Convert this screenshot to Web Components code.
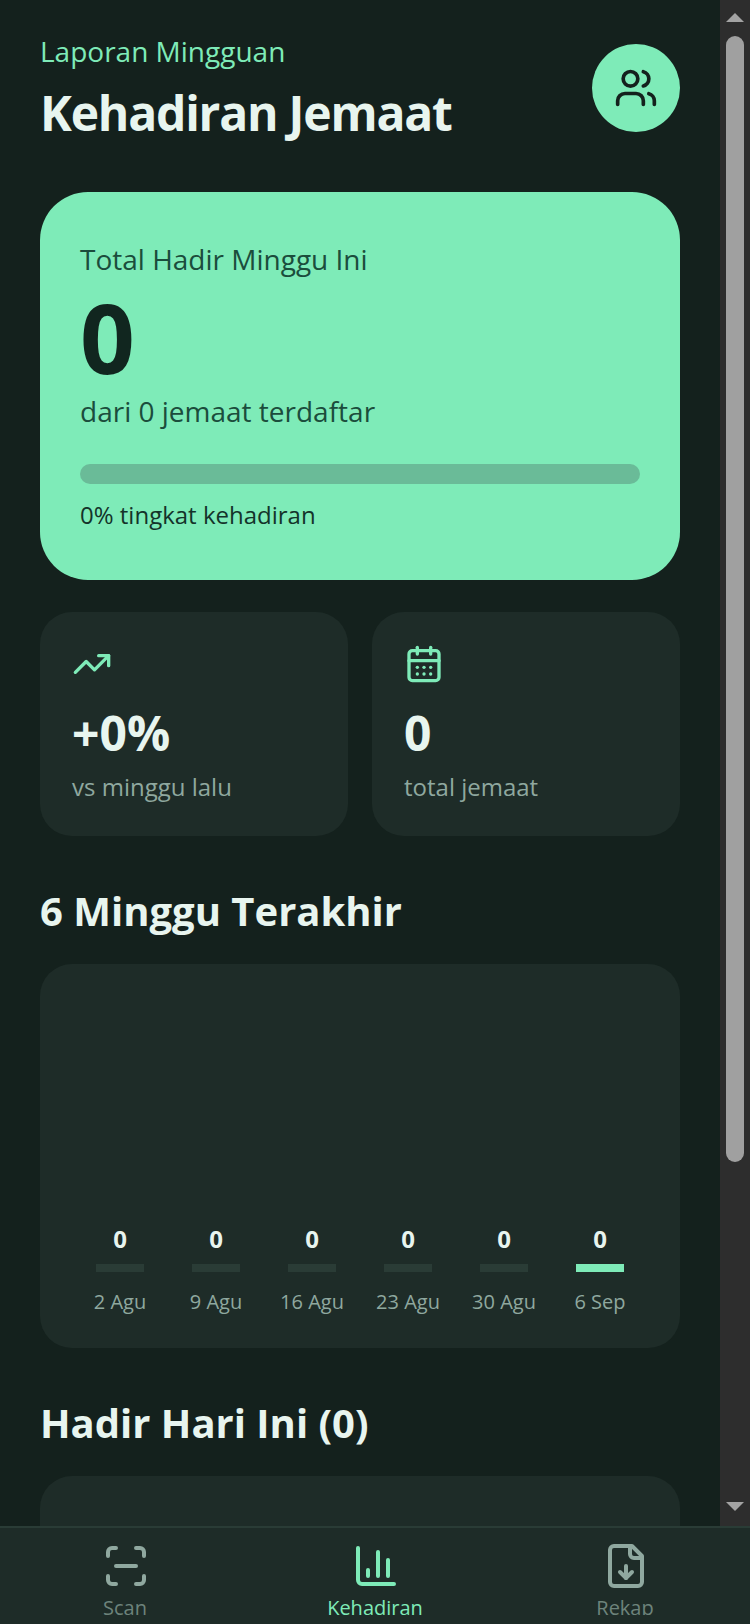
<!DOCTYPE html>
<html lang="id">
<head>
<meta charset="utf-8">
<title>Kehadiran Jemaat</title>
<style>
html,body{margin:0;padding:0;background:#14211d;height:100%;overflow:hidden}
body{font-family:"Open Sans",sans-serif;color:#e8f5ef}
</style>
</head>
<body>
<app-shell>
  <report-header kicker="Laporan Mingguan" heading="Kehadiran Jemaat"></report-header>
  <total-card label="Total Hadir Minggu Ini" value="0" sub="dari 0 jemaat terdaftar" rate="0% tingkat kehadiran"></total-card>
  <stat-grid>
    <stat-card icon="trend" value="+0%" label="vs minggu lalu"></stat-card>
    <stat-card icon="calendar" value="0" label="total jemaat"></stat-card>
  </stat-grid>
  <section-title>6 Minggu Terakhir</section-title>
  <week-chart>
    <week-bar value="0" label="2 Agu"></week-bar>
    <week-bar value="0" label="9 Agu"></week-bar>
    <week-bar value="0" label="16 Agu"></week-bar>
    <week-bar value="0" label="23 Agu"></week-bar>
    <week-bar value="0" label="30 Agu"></week-bar>
    <week-bar value="0" label="6 Sep" current></week-bar>
  </week-chart>
  <section-title>Hadir Hari Ini (0)</section-title>
  <empty-card></empty-card>
  <bottom-nav slot="nav">
    <nav-item icon="scan" label="Scan"></nav-item>
    <nav-item icon="chart" label="Kehadiran" active></nav-item>
    <nav-item icon="file" label="Rekap"></nav-item>
  </bottom-nav>
</app-shell>
<script>
const ICONS = {
  users: '<path d="M16 21v-2a4 4 0 0 0-4-4H6a4 4 0 0 0-4 4v2"/><circle cx="9" cy="7" r="4"/><path d="M22 21v-2a4 4 0 0 0-3-3.87"/><path d="M16 3.13a4 4 0 0 1 0 7.75"/>',
  trend: '<polyline points="22 7 13.5 15.5 8.5 10.5 2 17"/><polyline points="16 7 22 7 22 13"/>',
  calendar: '<path d="M8 2v4"/><path d="M16 2v4"/><rect width="18" height="18" x="3" y="4" rx="2"/><path d="M3 10h18"/><path d="M8 14h.01"/><path d="M12 14h.01"/><path d="M16 14h.01"/><path d="M8 18h.01"/><path d="M12 18h.01"/><path d="M16 18h.01"/>',
  scan: '<path d="M3 7V5a2 2 0 0 1 2-2h2"/><path d="M17 3h2a2 2 0 0 1 2 2v2"/><path d="M21 17v2a2 2 0 0 1-2 2h-2"/><path d="M7 21H5a2 2 0 0 1-2-2v-2"/><path d="M7 12h10"/>',
  chart: '<path d="M3 3v16a2 2 0 0 0 2 2h16"/><path d="M18 17V9"/><path d="M13 17V5"/><path d="M8 17v-3"/>',
  file: '<path d="M15 2H6a2 2 0 0 0-2 2v16a2 2 0 0 0 2 2h12a2 2 0 0 0 2-2V7Z"/><path d="M14 2v4a2 2 0 0 0 2 2h4"/><path d="M12 18v-6"/><path d="m9 15 3 3 3-3"/>'
};
const svg = (n, s) => `<svg part="icon" width="${s}" height="${s}" viewBox="0 0 24 24" fill="none" stroke="currentColor" stroke-width="2" stroke-linecap="round" stroke-linejoin="round" style="display:block">${ICONS[n]}</svg>`;

class Base extends HTMLElement {
  connectedCallback() {
    if (!this.shadowRoot) { this.attachShadow({mode:'open'}).innerHTML = this.render(); }
  }
  a(n) { return this.getAttribute(n) || ''; }
}

customElements.define('app-shell', class extends Base {
  render() { return `<style>
    :host{display:flex;flex-direction:column;width:750px;height:1624px;overflow:hidden;background:#14211d}
    .top{flex:1;min-height:0;display:flex}
    .main{flex:1;min-width:0;overflow:hidden;padding:32px 40px 0;box-sizing:border-box}
    .bar{flex:none;width:30px;background:#2d2d2d;display:flex;flex-direction:column;align-items:center}
    .up,.down{width:0;height:0;border-left:9px solid transparent;border-right:9px solid transparent;flex:none}
    .up{border-bottom:9px solid #a3a3a3;margin-top:13px}
    .thumb{width:18px;height:1126px;margin-top:14px;border-radius:9px;background:#a0a0a0;flex:none}
    .down{border-top:9px solid #a3a3a3;margin-top:auto;margin-bottom:15px}
  </style>
  <div class="top">
    <div class="main"><slot></slot></div>
    <div class="bar" aria-hidden="true"><div class="up"></div><div class="thumb"></div><div class="down"></div></div>
  </div>
  <slot name="nav"></slot>`; }
});

customElements.define('report-header', class extends Base {
  render() { return `<style>
    :host{display:flex;justify-content:space-between;align-items:flex-start;margin-bottom:51px}
    .k{font-size:28px;line-height:38px;color:#7eebb8}
    h1{margin:15px 0 0;font-size:48px;line-height:56px;font-weight:700;letter-spacing:-1.2px;color:#e8f5ef}
    .a{width:88px;height:88px;border-radius:50%;background:#7eebb8;color:#14211d;display:flex;align-items:center;justify-content:center;margin-top:12px}
  </style>
  <div><div class="k">${this.a('kicker')}</div><h1>${this.a('heading')}</h1></div>
  <div class="a">${svg('users',44)}</div>`; }
});

customElements.define('total-card', class extends Base {
  render() { return `<style>
    :host{display:block;background:#7eebb8;color:#11261f;border-radius:48px;padding:48px 40px 40px;margin-bottom:32px}
    .l{font-size:28px;line-height:38px;color:#1b4d3c}
    .v{font-size:96px;line-height:112px;font-weight:700;margin-top:3px}
    .s{font-size:28px;line-height:38px;color:#1b4d3c;margin-top:-1px}
    .t{height:20px;border-radius:10px;background:#6abb98;margin-top:34px}
    .r{font-size:24px;line-height:32px;margin-top:15px;color:#14332a;margin-bottom:9px}
  </style>
  <div class="l">${this.a('label')}</div>
  <div class="v">${this.a('value')}</div>
  <div class="s">${this.a('sub')}</div>
  <div class="t"></div>
  <div class="r">${this.a('rate')}</div>`; }
});

customElements.define('stat-grid', class extends Base {
  render() { return `<style>:host{display:grid;grid-template-columns:1fr 1fr;gap:24px;margin-bottom:47px}</style><slot></slot>`; }
});

customElements.define('stat-card', class extends Base {
  render() { return `<style>
    :host{display:block;background:#1e2c28;border-radius:32px;padding:32px;height:224px;box-sizing:border-box}
    .i{color:#7eebb8}
    .v{font-size:48px;line-height:56px;font-weight:700;color:#e8f5ef;margin-top:21px}
    .l{font-size:24px;line-height:32px;color:#8fa89f;margin-top:10px}
  </style>
  <div class="i">${svg(this.a('icon'),40)}</div>
  <div class="v">${this.a('value')}</div>
  <div class="l">${this.a('label')}</div>`; }
});

customElements.define('section-title', class extends Base {
  render() { return `<style>
    :host{display:block;font-size:40px;line-height:56px;font-weight:700;color:#e8f5ef;margin-bottom:25px}
  </style><slot></slot>`; }
});

customElements.define('week-chart', class extends Base {
  render() { return `<style>
    :host{display:flex;align-items:flex-end;height:384px;box-sizing:border-box;padding:0 32px 31px;background:#1e2c28;border-radius:32px;margin-bottom:47px}
    ::slotted(*){flex:1;min-width:0}
  </style><slot></slot>`; }
});

customElements.define('week-bar', class extends Base {
  render() { const cur=this.hasAttribute('current'); return `<style>
    :host{display:flex;flex-direction:column;align-items:center}
    .v{font-size:24px;line-height:32px;font-weight:700;color:#e8f5ef}
    .b{width:48px;height:8px;background:${cur?'#7eebb8':'#2a3c36'};margin-top:9px}
    .l{font-size:20px;line-height:30px;color:#8fa89f;margin-top:15px;white-space:nowrap}
  </style>
  <div class="v">${this.a('value')}</div><div class="b"></div><div class="l">${this.a('label')}</div>`; }
});

customElements.define('empty-card', class extends Base {
  render() { return `<style>:host{display:block;height:240px;background:#1e2c28;border-radius:32px}</style>`; }
});

customElements.define('bottom-nav', class extends Base {
  render() { return `<style>
    :host{flex:none;display:grid;grid-template-columns:repeat(3,1fr);height:98px;box-sizing:border-box;background:#1e2c28;border-top:2px solid #2a3c36;padding:14px 0 9px;position:relative}
  </style><slot></slot>`; }
});

customElements.define('nav-item', class extends Base {
  render() { const on=this.hasAttribute('active'); return `<style>
    :host{display:flex;flex-direction:column;align-items:center;overflow:hidden;color:${on?'#7eebb8':'#8fa89f'}}
    svg{flex:none;margin-left:2px}
    span{font-size:20px;line-height:28px;margin-top:4px;${on?'':'opacity:.7;'}}
  </style>${svg(this.a('icon'),48)}<span>${this.a('label')}</span>`; }
});
</script>
</body>
</html>
